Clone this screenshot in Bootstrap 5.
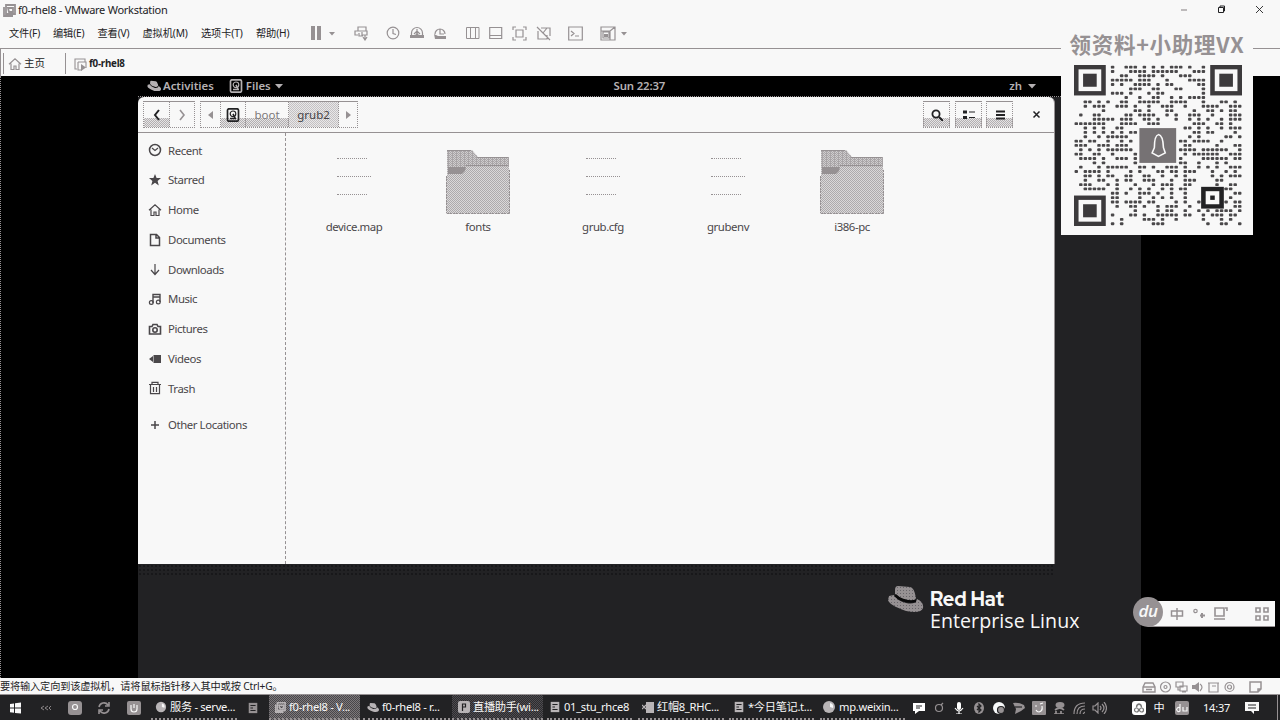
<!DOCTYPE html>
<html lang="zh-CN">
<head>
<meta charset="utf-8">
<meta name="viewport" content="width=device-width, initial-scale=1">
<title>f0-rhel8 - VMware Workstation</title>
<link href="https://cdn.jsdelivr.net/npm/bootstrap@5.3.0/dist/css/bootstrap.min.css" rel="stylesheet">
<style>
:root{--w:#f8f8f8;--g:#969193;--d:#222224;--half:repeating-conic-gradient(#b3afb1 0 25%,#e4e3e4 0 50%) 0 0/2px 2px}
body{width:1280px;height:720px;overflow:hidden;background:var(--w);color:var(--d);font:12px/1 "Noto Sans","Noto Sans CJK SC",sans-serif}
svg{display:block;flex:none;fill:none;stroke:currentColor;stroke-width:1.2}
svg .f{fill:currentColor;stroke:none}
.grey{color:var(--g)}
.i16{width:16px;height:16px}.i14{width:14px;height:14px}.i12{width:12px;height:12px}
.titlebar{height:19px;padding-left:2px;font-size:11px}
.titlebar .ttl{margin-left:2px;letter-spacing:-.26px}
.winbtns{margin-left:auto;margin-right:16px;gap:29px}
.menubar{height:30px;padding:0 0 1px 9px;font-size:10.2px;border-bottom:1px solid var(--g)}
.menubar .mi{white-space:nowrap;letter-spacing:-.12px}
.m1{width:44px}.m2{width:44.5px}.m3{width:45px}.m4{width:58.5px}.m5{width:55px}.m6{width:54px}
.tabs{height:27px;font-size:10.5px;border-left:1px solid var(--g);padding-top:2px}
.tab1{width:63px;height:21px;border-left:1px solid var(--g);border-right:1px solid var(--g);padding-left:4px;margin-left:2px}
.vm{height:602px;background:#000;border-left:1px dotted var(--g);padding-left:137px}
.guest{width:1003px;background:var(--d)}
.topbar{height:21px;background:#000;color:#b5b1b3;font-weight:600;font-size:11.4px;padding:0 0 1px 9px;border-bottom:1px dotted var(--g)}
.win{width:917px;height:467px;background:var(--w);border-radius:6px 6px 0 0;border-right:1px solid var(--g)}
.hdr{height:36px;border-bottom:1px solid var(--g);padding:0 13px 0 5px}
.nb{height:27px;border:1px dotted var(--g);border-top-style:solid}
.shade{background:linear-gradient(var(--w) 65%,transparent 65%),var(--half)}
.nb>div{height:100%;display:flex;align-items:center;justify-content:center;border-right:1px dotted var(--g)}
.nb>div:last-child{border:0}
.crumb{background:repeating-conic-gradient(#c4c1c3 0 25%,#e8e7e8 0 50%) 0 0/2px 2px;color:#454245}
.side{width:148px;border-right:1px dashed var(--g);padding-top:2.5px;color:#4a474a;font-size:11.4px}
.row-s{height:29.75px;padding-left:10px;gap:6px;letter-spacing:-.42px}
.row-s svg{width:14px;height:14px}
.files{padding:17px 0 0 6px}
.file{width:124px;font-size:11.4px;letter-spacing:-.42px;color:#4a474a}
.gap1{margin-left:1px}
.pic{height:64px;width:64px;margin-bottom:7px}
.doc{padding:8px 0 0 15px}
.dl{border-top:1px dotted var(--g);height:1px;width:34px;margin-bottom:17px}
.dl.s{width:30px}
.shadow-dots{height:12px;width:917px;background:radial-gradient(circle,#121214 .6px,transparent .9px) 0 0/4px 4px}
.rh{position:absolute;left:887px;top:583px;color:#f8f8f8;gap:6px}
.rh .a{font:800 19.6px/19px "Red Hat Display","Lato",sans-serif;letter-spacing:0;padding-top:7px}
.rh .b{font:400 19.6px/24px "Open Sans",sans-serif;letter-spacing:.05px;white-space:nowrap}
.status{height:17px;font-size:10.2px;padding:1px 17px 0 0;border-bottom:1px solid var(--g);letter-spacing:-.16px}
.task{height:25px;background:var(--d);color:var(--w);font-size:11.2px}
.task .q{width:29px;height:25px;display:flex;align-items:center;justify-content:center;flex:none}
.ap{height:25px;display:flex;align-items:center;gap:3px;padding-left:4px;border-bottom:2px dotted var(--g);white-space:nowrap;flex:none;letter-spacing:-.3px}
.ap svg{color:#b8b4b6}
.act{background:repeating-conic-gradient(#7c787a 0 25%,#48464a 0 50%) 0 0/2px 2px}
.act2{background:repeating-conic-gradient(#4e4c50 0 25%,#2c2b2e 0 50%) 0 0/2px 2px}
.t20{width:20px;display:flex;justify-content:center;color:var(--g);flex:none}
.qr{position:absolute;left:1061px;top:30px;width:192px;height:205px;background:var(--w)}
.qr .cap{font:700 21.5px/28px "Noto Sans CJK SC",sans-serif;color:var(--g);text-align:center;white-space:nowrap;letter-spacing:.75px;height:35px}
.qr svg{margin-left:13px}
.ime{position:absolute;left:1133px;top:597px;height:30px;width:143px}
.imebar{height:26px;width:127px;background:var(--w);margin:4px 0 0 -15px;border-bottom:1px solid var(--g);color:var(--g);padding:0 6px 0 22px}
.imeball{width:30px;height:30px;border-radius:50%;background:var(--g);color:var(--w);font:italic 600 17px/28px "Open Sans",sans-serif;letter-spacing:-.6px;text-align:center;z-index:1}
</style>
</head>
<body class="d-flex flex-column">
<svg width="0" height="0" class="position-absolute">
<defs><pattern id="dith" width="2" height="2" patternUnits="userSpaceOnUse"><path d="M0 0h2v2H0z" fill="#dad8d9" stroke="none"/><path d="M0 0h1v1H0zM1 1h1v1H1z" fill="#adaaac" stroke="none" shape-rendering="crispEdges"/></pattern>
<pattern id="dith2" width="4" height="2" patternUnits="userSpaceOnUse"><path d="M0 0h4v2H0z" fill="#cfcdce" stroke="none"/><path d="M0 0h1v1H0zM2 0h1v1H2zM1 1h3v1H1z" fill="#a9a5a7" stroke="none" shape-rendering="crispEdges"/></pattern>
<pattern id="dhat" width="3" height="3" patternUnits="userSpaceOnUse"><path d="M0 0h3v3H0z" fill="#969193" stroke="none"/><path d="M1 1h1v1H1z" fill="#68656a" stroke="none"/></pattern></defs>
<symbol id="vmw" viewBox="0 0 14 14"><path d="M4 2h9v9H4zM2 4v9h9M6 5h5v4H7z" stroke-width="1.8"/></symbol>
<symbol id="vmtab" viewBox="0 0 14 14"><path d="M4 12H2V2h10v3M5 5h8v6M5 5v8h4" stroke-width="1.1"/><path class="f" d="M8 7l5 3.500L8 14z"/></symbol>
<symbol id="car" viewBox="0 0 8 6"><path class="f" d="M0 1h8L4 5.5z"/></symbol>
<symbol id="clk" viewBox="0 0 14 14"><circle cx="7" cy="7" r="5.8"/><path d="M7 3v4.500l3 1"/></symbol>
<symbol id="recent" viewBox="0 0 14 14"><circle cx="7" cy="7" r="5.500" stroke-width="1.500"/><path d="M4 5l3 2.500L10 5"/></symbol>
<symbol id="folderc" viewBox="0 0 14 14"><rect x="1.500" y=".8" width="11" height="12.4" rx="1.5" stroke-width="1.700"/><circle cx="7" cy="5.8" r="2.8"/><path d="M4 10.500h6M7 5.800l2 4" stroke-width="1.600"/></symbol>
<symbol id="hat" viewBox="0 0 36 28"><path class="f" d="M8 7Q8 2 10 2L22 3Q26 3 29 14 27 19 20 17 11 15 8 10z"/><path class="f" d="M2 12L7 11Q9 17 19 20 29 21 30 15 37 19 36 24 34 31 19 28 2 22 1 16z"/></symbol>
<symbol id="home" viewBox="0 0 14 14"><path d="M1 7.300L7 1.800l6 5.500M3 6.500v6h3V9h2v3.500h3v-6"/></symbol>
<symbol id="blob" viewBox="0 0 14 14"><circle class="f" cx="7" cy="7" r="6"/><path d="M8 3q4 1 3 5l-3-1zM4 11l4-1" fill="#f8f8f8" stroke="none"/></symbol>
<symbol id="sq" viewBox="0 0 14 14"><rect class="f" width="14" height="14" rx="2"/><path d="M4 4v4q0 3 3 3t3-3V4M7 3v4" stroke="#f8f8f8"/></symbol>
<symbol id="note" viewBox="0 0 14 14"><path class="f" d="M2 1h10v12H2z"/><path d="M4 4h6M4 7h3M4 10h6" stroke="#222224"/></symbol>
</svg>

<div class="titlebar d-flex align-items-center">
<svg class="i14 grey"><use href="#vmw"/></svg><span class="ttl">f0-rhel8 - VMware Workstation</span>
<div class="winbtns d-flex align-items-center">
<svg width="9" height="9" class="grey"><path d="M2 5h6"/></svg>
<svg width="9" height="9"><path d="M1.500 2.500h5v5h-5zM3 2.500V1h4.500v5H7" stroke-width="1"/></svg>
<svg width="9" height="9"><path d="M1 1l7 7M8 1L1 8" stroke-width=".9"/></svg></div>
</div>

<div class="menubar d-flex align-items-center">
<span class="mi m1">文件(F)</span><span class="mi m2">编辑(E)</span><span class="mi m3">查看(V)</span><span class="mi m4">虚拟机(M)</span><span class="mi m5">选项卡(T)</span><span class="mi m6">帮助(H)</span>
<svg class="grey" width="12" height="14" style="margin-right:7px"><path class="f" d="M1 0h4v14H1zM7 0h4v14H7z"/></svg>
<svg class="grey" width="6" height="5" style="margin-right:19px"><use href="#car"/></svg>
<svg class="grey" width="15" height="15" style="margin-right:17px"><path d="M4 5V1h8v4M4 9H1V5h12v4H8V6M5 7v3h4M11 9v5M9 11l2 3 2-3"/></svg>
<svg class="grey" width="14" height="14" style="margin-right:10px"><use href="#clk"/></svg>
<svg class="grey" width="14" height="14" style="margin-right:9px"><path d="M1.500 10V7a5.500 5.500 0 0 1 11 0v3M7 3v6M4 8l3-3 3 3"/><path class="f" d="M0 9h5l2-2 2 2h5v3H0z"/></svg>
<svg class="grey" width="14" height="14" style="margin-right:19px"><path d="M2 8a5 5 0 1 1 10 0M7 3v5h4"/><path class="f" d="M1 8l4 2h8v3H2z"/></svg>
<svg class="grey" width="14" height="14" style="margin-right:9px"><path d="M.5 1.500h12.500v11H.5zM4.500 1v12M9.500 1v12" stroke-width="1"/></svg>
<svg class="grey" width="14" height="14" style="margin-right:9px"><path d="M.7 1.500h12v11H.7zM1 9.500h12"/></svg>
<svg class="grey" width="15" height="15" style="margin-right:9px"><path d="M1 4V1h3M11 1h3v3M14 11v3h-3M4 14H1v-3M4 4h7v7H4z"/></svg>
<svg class="grey" width="15" height="15" style="margin-right:17px"><path d="M5 2h9v8M2 5v8h9V9M1 1l13 13M7 7l4-5"/></svg>
<svg class="grey" width="15" height="15" style="margin-right:17px"><path d="M.7 1h13.600v13H.7zM3 5l3 2.500L3 10M7 10h4"/></svg>
<svg class="grey" width="16" height="15" style="margin-right:5px"><path d="M1 1h14v13H1zM1 5h9v9M10 5l5-4M3 6h6v6H3z"/><path class="f" d="M4 8h4v3H4z"/></svg>
<svg class="grey" width="6" height="5"><use href="#car"/></svg>
</div>

<div class="tabs d-flex align-items-center">
<div class="tab1 d-flex align-items-center gap-1"><svg class="i14 grey"><use href="#home"/></svg><span style="margin-left:-2px">主页</span></div>
<svg class="grey i14" style="margin-left:7px"><use href="#vmtab"/></svg><b style="margin-left:2px;font-size:9.8px;letter-spacing:-.25px">f0-rhel8</b>
</div>

<div class="vm">
<div class="guest h-100">
<div class="topbar d-flex align-items-center">
<svg width="14" height="11"><use href="#hat"/></svg><span style="margin-left:2px">Activities</span>
<svg class="i14" style="margin-left:15px"><use href="#folderc"/></svg><span style="margin-left:3px">Files</span><svg width="8" height="6" style="margin-left:4px"><use href="#car"/></svg>
<span class="ms-auto" style="margin-right:344px;letter-spacing:-.15px">Sun 22:37</span><span>zh</span><svg width="8" height="6" style="margin:0 105px 0 6px"><use href="#car"/></svg>
</div>
<div class="win">
<div class="hdr d-flex align-items-center">
<div class="nb d-flex" style="width:52px"><div class="shade" style="width:26px"><svg width="8" height="12"><path d="M6 1L2 6l4 5" stroke-width="2"/></svg></div><div class="grey flex-fill"><svg width="8" height="12"><path d="M2 1l4 5-4 5" stroke-width="1.6"/></svg></div></div>
<div class="nb d-flex" style="margin-left:5px;width:158px;font-size:11.5px">
<div style="width:20px" class="grey"><svg width="6" height="8"><path class="f" d="M5 0v8L0 4z"/></svg></div>
<div style="width:25px" class="shade"><svg class="i14"><use href="#folderc"/></svg></div>
<div style="width:43px;color:#7d797b" class="shade">boot</div>
<div style="width:50px" class="crumb">grub2</div>
<div class="grey flex-fill"><svg width="6" height="8"><path class="f" d="M1 0v8l5-4z"/></svg></div></div>
<div class="ms-auto d-flex align-items-center gap-1">
<div class="nb shade" style="width:27px"><div><svg class="i12"><circle cx="5" cy="5" r="3.600" stroke-width="1.800"/><path d="M8 8l4 4" stroke-width="2"/></svg></div></div>
<div class="nb shade" style="width:27px;margin-left:1px"><div><svg class="i12"><path d="M0 3h4M0 8.500h4" stroke-width="3"/><path d="M6 3h6M6 8.500h6"/></svg></div></div>
<div class="nb shade" style="width:27px"><div><svg class="i12"><path d="M2 2.500h9M2 6h9M2 9.500h9" stroke-width="2"/></svg></div></div>
<svg width="9" height="9" style="margin-left:15px"><path d="M1.500 1.500l6 6M7.500 1.500l-6 6" stroke-width="1.500"/></svg>
</div></div>
<div class="d-flex" style="height:431px">
<div class="side">
<div class="row-s d-flex align-items-center"><svg><use href="#recent"/></svg>Recent</div>
<div class="row-s d-flex align-items-center"><svg><path class="f" d="M7 1l1.600 4H13L9.600 8l1.200 4.400L7 9.800l-3.800 2.600L4.400 8 1 5h4.400z"/></svg>Starred</div>
<div class="row-s d-flex align-items-center"><svg><use href="#home"/></svg>Home</div>
<div class="row-s d-flex align-items-center"><svg><path d="M2.500 1.500h6l3 3v8h-9zM8 1.500V5h3.500" stroke-width="1.500"/></svg>Documents</div>
<div class="row-s d-flex align-items-center"><svg><path d="M7 2v10M3 8l4 4.500L11 8"/></svg>Downloads</div>
<div class="row-s d-flex align-items-center"><svg><path d="M5 11V2.500h7V10M5 5h7" stroke-width="1.400"/><circle cx="3.300" cy="10.500" r="1.900"/><circle cx="10.300" cy="10" r="1.900"/></svg>Music</div>
<div class="row-s d-flex align-items-center"><svg><path d="M1.500 4.500H4l1-2h4l1 2h2.500v7.500h-11z" stroke-width="1.600"/><circle cx="7" cy="8" r="2.200" stroke-width="1.600"/></svg>Pictures</div>
<div class="row-s d-flex align-items-center"><svg><path class="f" d="M5.500 3H13v8H5.500zM1 7l4-3v6z"/></svg>Videos</div>
<div class="row-s d-flex align-items-center"><svg><path d="M1 3.500h12M4 3V1.300h6V3M2.500 4v8.700h9V4M5.500 6v5M8.500 6v5"/></svg>Trash</div>
<div class="row-s d-flex align-items-center" style="margin-top:7px"><svg><path d="M7 3v8M3 7h8" stroke-width="1.500"/></svg>Other Locations</div>
</div>
<div class="files d-flex align-items-start">
<div class="file d-flex flex-column align-items-center"><div class="pic doc"><div class="dl s"></div><div class="dl"></div><div class="dl s"></div></div>device.map</div>
<div class="file d-flex flex-column align-items-center"><div class="pic"><svg class="grey" width="64" height="64"><path d="M1 0h25l6 7h31v10H1z" fill="url(#dith2)" stroke="none"/><path d="M1 17h62v1l1 8v38H0V26h1z" fill="url(#dith)" stroke="none"/><path class="f" d="M2 17h18l-1 4-3 3H2z"/><path d="M1 .5h24M31 7.500h31M20 15.500h42" stroke-width="1"/><path d="M1 63.500h62M.5 26v37M63.500 20v43" stroke-width="1" stroke-dasharray="2 1"/></svg></div>fonts</div>
<div class="file gap1 d-flex flex-column align-items-center"><div class="pic doc"><div class="dl s"></div><div class="dl"></div><div class="dl s"></div></div>grub.cfg</div>
<div class="file gap1 d-flex flex-column align-items-center"><div class="pic doc"><div class="dl s"></div><div class="dl"></div><div class="dl s"></div></div>grubenv</div>
<div class="file d-flex flex-column align-items-center"><div class="pic"><svg class="grey" width="64" height="64"><path d="M1 0h25l6 7h31v10H1z" fill="url(#dith2)" stroke="none"/><path d="M1 17h62v1l1 8v38H0V26h1z" fill="url(#dith)" stroke="none"/><path class="f" d="M2 17h18l-1 4-3 3H2z"/><path d="M1 .5h24M31 7.500h31M20 15.500h42" stroke-width="1"/><path d="M1 63.500h62M.5 26v37M63.500 20v43" stroke-width="1" stroke-dasharray="2 1"/></svg></div>i386-pc</div>
</div></div></div>
<div class="shadow-dots"></div>
</div></div>

<div class="status d-flex align-items-center"><span>要将输入定向到该虚拟机，请将鼠标指针移入其中或按 Ctrl+G。</span>
<div class="ms-auto d-flex grey" style="gap:3px">
<svg width="14" height="12"><path d="M1 6l2-4h8l2 4v5H1zM1 6h12M4 8.500h6" stroke-width="1.400"/></svg>
<svg width="13" height="12"><circle cx="6.500" cy="6" r="5"/><circle cx="6.500" cy="6" r="1.500"/></svg>
<svg width="13" height="12"><path d="M1 1h7v5H1zM5 5h7v5H5zM3 6v3h2M7 11h4"/></svg>
<svg width="13" height="12"><path class="f" d="M1 4h3l4-3v10L4 8H1z"/><path d="M9 3q4 3 0 7"/></svg>
<svg width="13" height="12"><path d="M1 2h11M2 2v9h9V2M5 5h4"/></svg>
<svg width="13" height="12"><circle cx="6.500" cy="6" r="4.500"/><circle cx="6.500" cy="6" r="2"/></svg>
<svg width="14" height="12" style="margin-left:10px"><path d="M1 1h11v7l-3 3H1zM12 8H9v3" stroke-width="1.500"/></svg></div></div>

<div class="task d-flex align-items-center">
<div class="q"><svg class="i12"><path class="f" d="M1 2l4-.6V5.500H1zM6 1.200L12 .5v5H6zM1 6.500h4v4.300L1 10.200zM6 6.500h6v5L6 10.900z"/></svg></div>
<div class="q grey" style="width:33px"><svg width="12" height="6"><path d="M4 1L1 3l3 2M8 1L5 3l3 2M11 1L9 3l2 2" stroke-width=".9"/></svg></div>
<div class="q grey" style="width:26px"><svg class="i14"><rect class="f" width="14" height="14" rx="3"/><circle cx="7" cy="6" r="2.500" stroke="#f8f8f8"/></svg></div>
<div class="q grey" style="width:31px"><svg class="i14"><path d="M2 6a5 5 0 0 1 9-2M12 1v4H8M12 8a5 5 0 0 1-9 2M2 13V9h4" stroke-width="1.600"/></svg></div>
<div class="q grey"><svg class="i14"><use href="#sq"/></svg></div>
<div class="ap" style="width:86px;margin-left:3px"><svg class="i12"><use href="#blob"/></svg>服务 - serve...</div>
<div class="q" style="width:32px"><svg class="i12 grey"><use href="#note"/></svg></div>
<div class="ap act" style="width:91px;padding-left:5px"><svg class="i12 grey"><use href="#vmw"/></svg><span>f0-rhel8 - V...</span></div>
<div class="ap" style="width:87px;margin-left:3px"><svg class="i12"><use href="#hat"/></svg>f0-rhel8 - r...</div>
<div class="ap act2" style="width:91px;margin-left:2px;padding-left:6px"><svg class="i12"><rect class="f" width="12" height="12" rx="2"/><path d="M4.500 10V3h3v3h-3" stroke="#222224"/></svg>直播助手(wi...</div>
<div class="ap" style="width:85px;margin-left:4px;padding-left:2px"><svg class="i12"><use href="#note"/></svg>01_stu_rhce8</div>
<div class="ap" style="width:86px;margin-left:6px"><svg class="i12"><path class="f" d="M4 1h8v11H4z"/><path d="M0 4l4 4M4 4L0 8"/></svg>红帽8_RHC...</div>
<div class="ap" style="width:85px;margin-left:5px"><svg class="i12"><use href="#note"/></svg>*今日笔记.t...</div>
<div class="ap" style="width:85px;margin-left:6px;padding-left:2px"><svg class="i14"><use href="#blob"/></svg>mp.weixin...</div>
<div class="d-flex align-items-center" style="margin-left:4px">
<div class="t20 text-white"><svg class="i12"><path class="f" d="M0 1h12v8H6l-4 3V9H0z"/><path d="M3 4h6M3 6h4" stroke="#222224"/></svg></div>
<div class="t20"><svg class="i12"><circle cx="6" cy="6" r="3.500"/><path d="M8 3l2-2"/></svg></div>
<div class="t20 text-white"><svg class="i12"><rect class="f" x="4" y="0" width="4" height="8" rx="2"/><path d="M2 6q4 6 8 0M6 9v3M3 12h6"/></svg></div>
<div class="t20"><svg class="i12"><ellipse class="f" cx="6" cy="6" rx="5" ry="6"/><path d="M4 4l4 4-2 2V2l2 2-4 4" stroke="#222224"/></svg></div>
<div class="t20 text-light"><svg class="i14"><use href="#blob"/><circle cx="9" cy="9" r="3.500" fill="#969193" stroke="#222224"/></svg></div>
<div class="t20"><svg class="i12"><path class="f" d="M0 1q5-1 11 2l1 3-4 3-6 3 1-5z"/><path d="M2 5h7" stroke="#222224"/></svg></div>
<div class="t20"><svg class="i14"><rect class="f" width="14" height="14" rx="1"/><path d="M3 5h2M8 3l3-1M10 5q1 5-3 6-2 0-3-2" stroke="#f8f8f8"/></svg></div>
<div class="t20"><svg class="i12"><ellipse class="f" cx="7" cy="3" rx="4.500" ry="3"/><path d="M2 8q5-4 9 0M3 9v3M8 9v3M1 12h10" stroke-width="1.700"/></svg></div>
<div class="t20"><svg class="i12"><path d="M1 12Q1 1 12 1M4 12q0-8 8-8M7 12q0-5 5-5M10 12l2-2"/></svg></div>
<div class="t20"><svg width="15" height="12"><path d="M1 4h2l3-3v10L3 8H1zM8 4q2 2 0 4M10 2q4 4 0 8M12 0q5 6 0 12"/></svg></div>
</div>
<div class="t20 text-white" style="margin-left:20px"><svg class="i14"><rect class="f" width="14" height="14" rx="3"/><path d="M4.500 6.500q0-3 2.500-3.500 2.500.5 2.500 3.500" stroke="#777" stroke-width="1.300"/><circle cx="4.500" cy="9" r="2" stroke="#777"/><circle cx="9.500" cy="9" r="2" stroke="#777"/></svg></div>
<div class="t20 text-light">中</div>
<div class="t20" style="margin-left:3px"><svg class="i14"><rect class="f" width="14" height="14" rx="2"/><path d="M5 7a2 2 0 1 0 0 3V3M8 6v4h4V6" stroke="#f8f8f8"/></svg></div>
<span style="margin-left:11px;font-size:11px;letter-spacing:-.2px">14:37</span>
<svg width="14" height="14" style="margin-left:15px"><path class="f" d="M0 1h14v9H9v3l-3-3H0z"/><path d="M3 4h8M3 7h8" stroke="#222224"/></svg>
<div style="margin-left:18px;border-left:1px solid var(--g);height:25px"></div>
</div>

<div class="rh d-flex"><svg width="37" height="30"><g fill="url(#dhat)" stroke="none"><path d="M8 7Q8 3 11 3L23 4Q27 4 29 15 27 19 20 17 11 15 8 11z"/><path d="M2 13L7 12Q9 17 19 20 29 22 30 16 37 19 36 25 34 31 19 28 2 22 1 17z"/></g><path d="M8 12q8 8 21 6" stroke="#09090a" stroke-width="2.500"/></svg><div><div class="a">Red Hat</div><div class="b">Enterprise Linux</div></div></div>

<div class="qr"><div class="cap">领资料+小助理VX</div><svg id="code" width="168" height="161" viewBox="0 0 37 37" preserveAspectRatio="none"></svg></div>

<div class="ime d-flex align-items-center"><div class="imeball">du</div><div class="imebar d-flex align-items-center">
<svg class="i14"><path d="M1.500 4h11v5h-11zM7 1v12" stroke-width="1.500"/></svg>
<svg class="i14" style="margin-left:8px"><circle cx="3.500" cy="4" r="1.700"/><path d="M10 6v5M8 8.500h5" stroke-width="2"/></svg>
<svg width="15" height="15" style="margin-left:7px"><path d="M2 2h9v8H2zM1 13h11M12 2h2v3" stroke-width="1.600"/></svg>
<svg class="i14 ms-auto"><path d="M1 1h4v4H1zM9 1h4v4H9zM1 9h4v4H1zM9 9h4v4H9z" stroke-width="1.600"/></svg></div></div>

<script src="https://cdn.jsdelivr.net/npm/bootstrap@5.3.0/dist/js/bootstrap.bundle.min.js"></script>
<script>
(function(){
  let s=90217,out='';
  const first=[8,11,12,13,15,17,19,21,22,23,25,28];
  const rnd=()=>(s=(s*1103515245+12345)%2147483648)/2147483648;
  for(let y=0;y<37;y++)for(let x=0;x<37;x++){
    const r=rnd();
    if((x<8&&y<8)||(x>28&&y<8)||(x<8&&y>28)||(x>27&&x<33&&y>27&&y<33)||(x>13&&x<23&&y>13&&y<23))continue;
    if(y===0?first.includes(x):r<.46)out+='<rect x="'+(x+.12)+'" y="'+(y+.15)+'" width=".76" height=".66" rx=".2" fill="#4a484a" stroke="none"/>';
  }
  const finder=(x,y)=>'<rect x="'+(x+.5)+'" y="'+(y+.5)+'" width="6" height="6" fill="none" stroke="#3c3a3c" stroke-width="1"/><rect x="'+(x+2)+'" y="'+(y+2)+'" width="3" height="3" fill="#3c3a3c" stroke="none"/>';
  out+=finder(0,0)+finder(30,0)+finder(0,30);
  out+='<rect x="28.500" y="28.500" width="4" height="4" fill="none" stroke="#222224" stroke-width="1"/><rect x="30" y="30" width="1" height="1" fill="#222224" stroke="none"/>';
  out+='<rect x="14.400" y="14.500" width="8.100" height="8" fill="#767274" stroke="none"/><path d="M17.700 19q0-2.800.9-3 1 .2 1.100 3l.4 1.200-1.500.8-1.400-.8z" fill="#767274" stroke="#f8f8f8" stroke-width=".35"/>';
  document.getElementById('code').innerHTML=out;
})();
</script>
</body>
</html>
